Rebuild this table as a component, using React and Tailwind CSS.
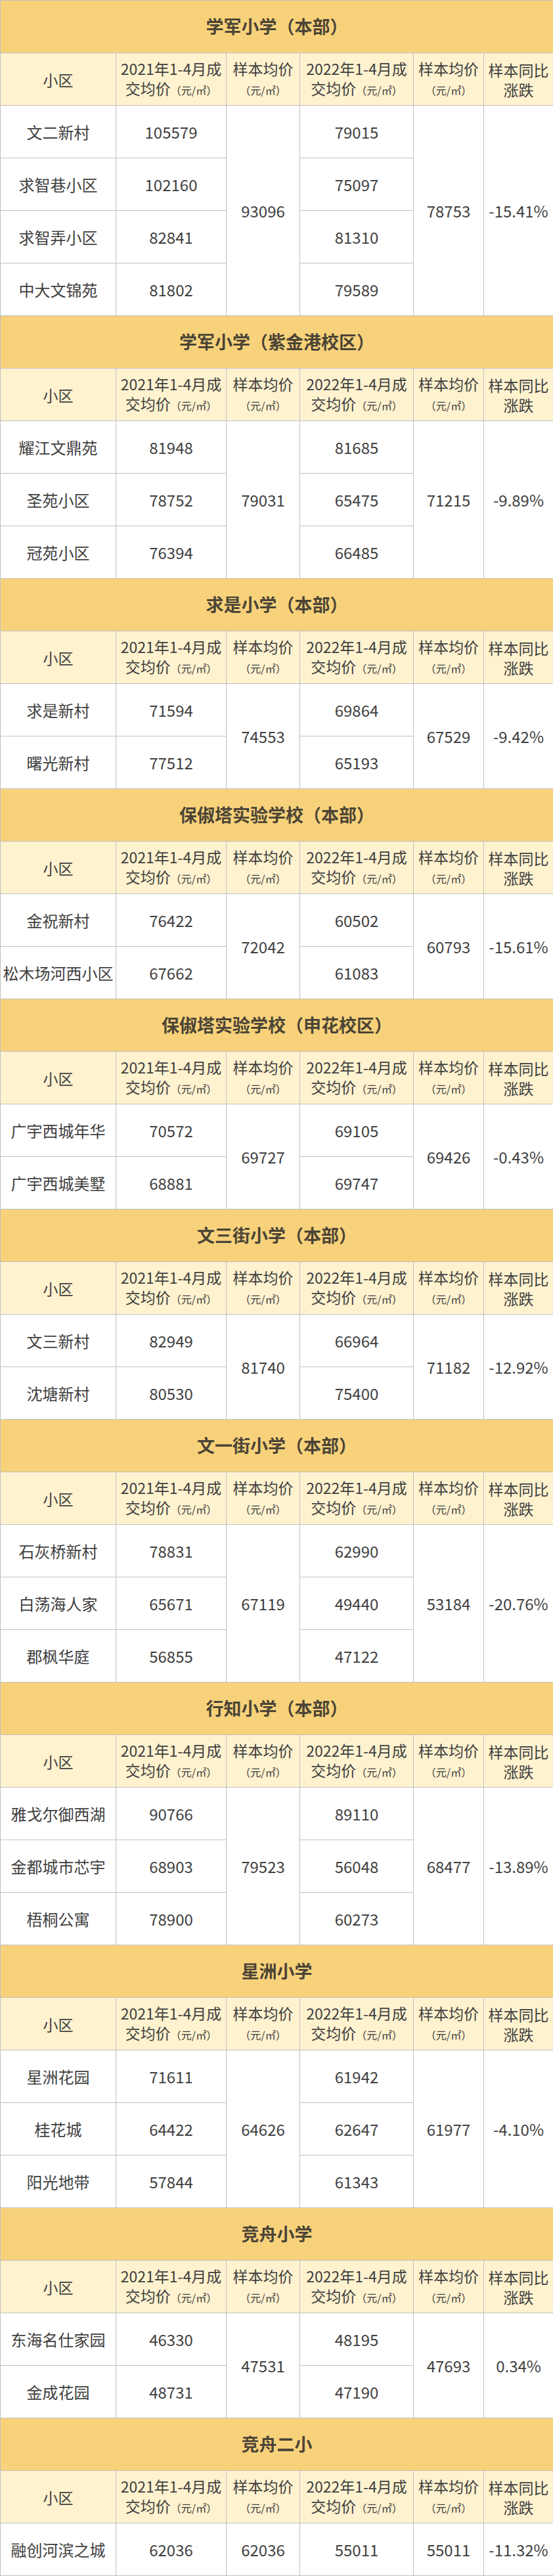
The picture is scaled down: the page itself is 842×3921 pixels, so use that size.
import React from 'react';

const schools = [
  {
    name: '学军小学（本部）',
    avg21: '93096',
    avg22: '78753',
    change: '-15.41%',
    rows: [
      ['文二新村', '105579', '79015'],
      ['求智巷小区', '102160', '75097'],
      ['求智弄小区', '82841', '81310'],
      ['中大文锦苑', '81802', '79589'],
    ],
  },
  {
    name: '学军小学（紫金港校区）',
    avg21: '79031',
    avg22: '71215',
    change: '-9.89%',
    rows: [
      ['耀江文鼎苑', '81948', '81685'],
      ['圣苑小区', '78752', '65475'],
      ['冠苑小区', '76394', '66485'],
    ],
  },
  {
    name: '求是小学（本部）',
    avg21: '74553',
    avg22: '67529',
    change: '-9.42%',
    rows: [
      ['求是新村', '71594', '69864'],
      ['曙光新村', '77512', '65193'],
    ],
  },
  {
    name: '保俶塔实验学校（本部）',
    avg21: '72042',
    avg22: '60793',
    change: '-15.61%',
    rows: [
      ['金祝新村', '76422', '60502'],
      ['松木场河西小区', '67662', '61083'],
    ],
  },
  {
    name: '保俶塔实验学校（申花校区）',
    avg21: '69727',
    avg22: '69426',
    change: '-0.43%',
    rows: [
      ['广宇西城年华', '70572', '69105'],
      ['广宇西城美墅', '68881', '69747'],
    ],
  },
  {
    name: '文三街小学（本部）',
    avg21: '81740',
    avg22: '71182',
    change: '-12.92%',
    rows: [
      ['文三新村', '82949', '66964'],
      ['沈塘新村', '80530', '75400'],
    ],
  },
  {
    name: '文一街小学（本部）',
    avg21: '67119',
    avg22: '53184',
    change: '-20.76%',
    rows: [
      ['石灰桥新村', '78831', '62990'],
      ['白荡海人家', '65671', '49440'],
      ['郡枫华庭', '56855', '47122'],
    ],
  },
  {
    name: '行知小学（本部）',
    avg21: '79523',
    avg22: '68477',
    change: '-13.89%',
    rows: [
      ['雅戈尔御西湖', '90766', '89110'],
      ['金都城市芯宇', '68903', '56048'],
      ['梧桐公寓', '78900', '60273'],
    ],
  },
  {
    name: '星洲小学',
    avg21: '64626',
    avg22: '61977',
    change: '-4.10%',
    rows: [
      ['星洲花园', '71611', '61942'],
      ['桂花城', '64422', '62647'],
      ['阳光地带', '57844', '61343'],
    ],
  },
  {
    name: '竞舟小学',
    avg21: '47531',
    avg22: '47693',
    change: '0.34%',
    rows: [
      ['东海名仕家园', '46330', '48195'],
      ['金成花园', '48731', '47190'],
    ],
  },
  {
    name: '竞舟二小',
    avg21: '62036',
    avg22: '55011',
    change: '-11.32%',
    rows: [['融创河滨之城', '62036', '55011']],
  },
];

const cell = 'border border-[#c0c0c0] text-center align-middle p-0 whitespace-nowrap';
const unit = <span className="text-[16px]">（元/㎡）</span>;

const HeaderRow = () => (
  <tr className="h-[80px] bg-[#fff2cf] text-[23px] leading-[30px]">
    <td className={cell}>小区</td>
    <td className={cell}>
      <div>2021年1-4月成</div>
      <div>交均价{unit}</div>
    </td>
    <td className={cell}>
      <div>样本均价</div>
      <div>{unit}</div>
    </td>
    <td className={cell}>
      <div>2022年1-4月成</div>
      <div>交均价{unit}</div>
    </td>
    <td className={cell}>
      <div>样本均价</div>
      <div>{unit}</div>
    </td>
    <td className={cell}>
      <div>样本同比</div>
      <div>涨跌</div>
    </td>
  </tr>
);

const SchoolBlock = ({ school }) => {
  const span = school.rows.length;
  return (
    <>
      <tr className="h-[80px] bg-[#f8d27b]">
        <td colSpan={6} className={`${cell} text-[27px] font-bold text-[#4b4436]`}>
          {school.name}
        </td>
      </tr>
      <HeaderRow />
      {school.rows.map((r, i) => (
        <tr key={r[0]} className="h-[80px] bg-white text-[24px]">
          <td className={cell}>{r[0]}</td>
          <td className={cell}>{r[1]}</td>
          {i === 0 && (
            <td rowSpan={span} className={cell}>
              {school.avg21}
            </td>
          )}
          <td className={cell}>{r[2]}</td>
          {i === 0 && (
            <td rowSpan={span} className={cell}>
              {school.avg22}
            </td>
          )}
          {i === 0 && (
            <td rowSpan={span} className={cell}>
              {school.change}
            </td>
          )}
        </tr>
      ))}
    </>
  );
};

export default function App() {
  return (
    <div className="w-[842px] bg-white font-['Noto_Sans_CJK_SC','Noto_Sans',sans-serif] text-[#404040]">
      <table className="w-[842px] table-fixed border-collapse">
        <colgroup>
          <col className="w-[176px]" />
          <col className="w-[168px]" />
          <col className="w-[112px]" />
          <col className="w-[173px]" />
          <col className="w-[107px]" />
          <col className="w-[106px]" />
        </colgroup>
        <tbody>
          {schools.map((s) => (
            <SchoolBlock key={s.name} school={s} />
          ))}
        </tbody>
      </table>
    </div>
  );
}
